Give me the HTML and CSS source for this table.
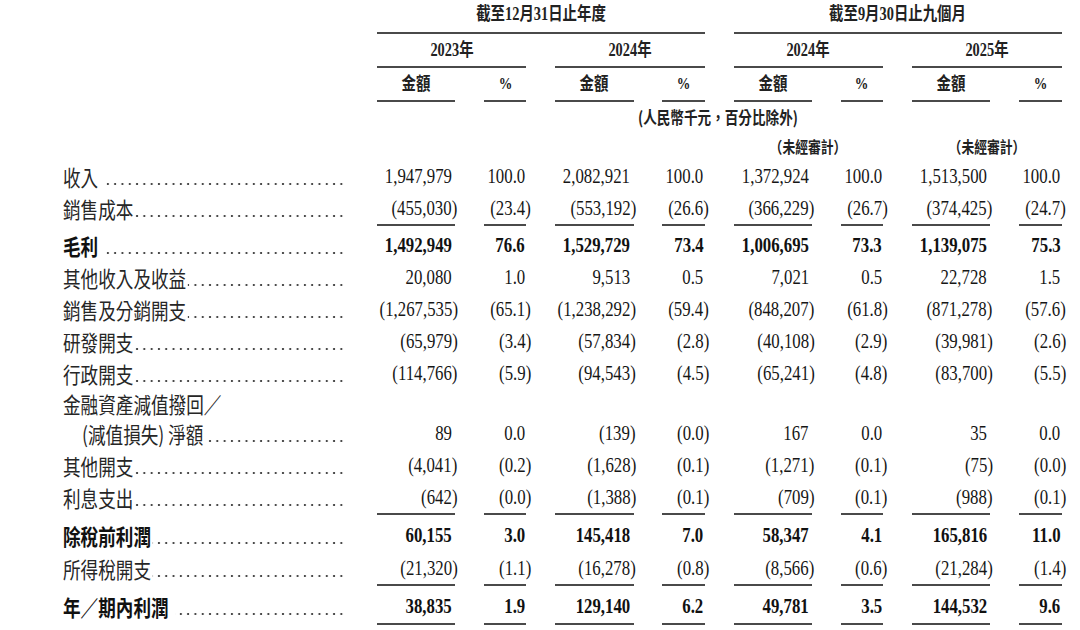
FILE: index.html
```html
<!DOCTYPE html>
<html lang="zh-Hant">
<head>
<meta charset="utf-8">
<title>損益表摘要</title>
<link rel="stylesheet" href="styles.css">
</head>
<body>
<div class="sheet">
  <div class="row hA">
    <div class="lbl nodots"></div>
    <div class="h g1"><span class="s">截至12月31日止年度</span></div>
    <div class="h g2"><span class="s">截至9月30日止九個月</span></div>
  </div>
  <div class="row hB">
    <div class="lbl nodots"></div>
    <div class="h y1"><span class="s">2023年</span></div>
    <div class="h y2"><span class="s">2024年</span></div>
    <div class="h y3"><span class="s">2024年</span></div>
    <div class="h y4"><span class="s">2025年</span></div>
  </div>
  <div class="row hC">
    <div class="lbl nodots"></div>
    <div class="h"><span class="s">金額</span></div><div class="h pc"><span class="s">%</span></div>
    <div class="h"><span class="s">金額</span></div><div class="h pc"><span class="s">%</span></div>
    <div class="h"><span class="s">金額</span></div><div class="h pc"><span class="s">%</span></div>
    <div class="h"><span class="s">金額</span></div><div class="h pc"><span class="s">%</span></div>
  </div>
  <div class="row hD">
    <div class="lbl nodots"></div>
    <div class="h all"><span class="s">(人民幣千元，百分比除外)</span></div>
  </div>
  <div class="row hE">
    <div class="lbl nodots"></div>
    <div class="h y3"><span class="s">（未經審計）</span></div>
    <div class="h y4"><span class="s">（未經審計）</span></div>
  </div>

  <div class="row d">
    <div class="lbl"><span class="t sp">收入</span></div>
    <div class="a"><span class="n">1,947,979</span></div><div class="p"><span class="n">100.0</span></div>
    <div class="a"><span class="n">2,082,921</span></div><div class="p"><span class="n">100.0</span></div>
    <div class="a"><span class="n">1,372,924</span></div><div class="p"><span class="n">100.0</span></div>
    <div class="a"><span class="n">1,513,500</span></div><div class="p"><span class="n">100.0</span></div>
  </div>
  <div class="row d ul">
    <div class="lbl"><span class="t">銷售成本</span></div>
    <div class="a"><span class="n neg">(455,030)</span></div><div class="p"><span class="n neg">(23.4)</span></div>
    <div class="a"><span class="n neg">(553,192)</span></div><div class="p"><span class="n neg">(26.6)</span></div>
    <div class="a"><span class="n neg">(366,229)</span></div><div class="p"><span class="n neg">(26.7)</span></div>
    <div class="a"><span class="n neg">(374,425)</span></div><div class="p"><span class="n neg">(24.7)</span></div>
  </div>
  <div class="row d b after">
    <div class="lbl"><span class="t sp">毛利</span></div>
    <div class="a"><span class="n">1,492,949</span></div><div class="p"><span class="n">76.6</span></div>
    <div class="a"><span class="n">1,529,729</span></div><div class="p"><span class="n">73.4</span></div>
    <div class="a"><span class="n">1,006,695</span></div><div class="p"><span class="n">73.3</span></div>
    <div class="a"><span class="n">1,139,075</span></div><div class="p"><span class="n">75.3</span></div>
  </div>
  <div class="row d">
    <div class="lbl"><span class="t">其他收入及收益</span></div>
    <div class="a"><span class="n">20,080</span></div><div class="p"><span class="n">1.0</span></div>
    <div class="a"><span class="n">9,513</span></div><div class="p"><span class="n">0.5</span></div>
    <div class="a"><span class="n">7,021</span></div><div class="p"><span class="n">0.5</span></div>
    <div class="a"><span class="n">22,728</span></div><div class="p"><span class="n">1.5</span></div>
  </div>
  <div class="row d">
    <div class="lbl"><span class="t">銷售及分銷開支</span></div>
    <div class="a"><span class="n neg">(1,267,535)</span></div><div class="p"><span class="n neg">(65.1)</span></div>
    <div class="a"><span class="n neg">(1,238,292)</span></div><div class="p"><span class="n neg">(59.4)</span></div>
    <div class="a"><span class="n neg">(848,207)</span></div><div class="p"><span class="n neg">(61.8)</span></div>
    <div class="a"><span class="n neg">(871,278)</span></div><div class="p"><span class="n neg">(57.6)</span></div>
  </div>
  <div class="row d">
    <div class="lbl"><span class="t">研發開支</span></div>
    <div class="a"><span class="n neg">(65,979)</span></div><div class="p"><span class="n neg">(3.4)</span></div>
    <div class="a"><span class="n neg">(57,834)</span></div><div class="p"><span class="n neg">(2.8)</span></div>
    <div class="a"><span class="n neg">(40,108)</span></div><div class="p"><span class="n neg">(2.9)</span></div>
    <div class="a"><span class="n neg">(39,981)</span></div><div class="p"><span class="n neg">(2.6)</span></div>
  </div>
  <div class="row d">
    <div class="lbl"><span class="t">行政開支</span></div>
    <div class="a"><span class="n neg">(114,766)</span></div><div class="p"><span class="n neg">(5.9)</span></div>
    <div class="a"><span class="n neg">(94,543)</span></div><div class="p"><span class="n neg">(4.5)</span></div>
    <div class="a"><span class="n neg">(65,241)</span></div><div class="p"><span class="n neg">(4.8)</span></div>
    <div class="a"><span class="n neg">(83,700)</span></div><div class="p"><span class="n neg">(5.5)</span></div>
  </div>
  <div class="row d short">
    <div class="lbl nodots"><span class="t">金融資產減值撥回／</span></div>
  </div>
  <div class="row d">
    <div class="lbl indent"><span class="t">(減值損失) 淨額</span></div>
    <div class="a"><span class="n">89</span></div><div class="p"><span class="n">0.0</span></div>
    <div class="a"><span class="n neg">(139)</span></div><div class="p"><span class="n neg">(0.0)</span></div>
    <div class="a"><span class="n">167</span></div><div class="p"><span class="n">0.0</span></div>
    <div class="a"><span class="n">35</span></div><div class="p"><span class="n">0.0</span></div>
  </div>
  <div class="row d">
    <div class="lbl"><span class="t">其他開支</span></div>
    <div class="a"><span class="n neg">(4,041)</span></div><div class="p"><span class="n neg">(0.2)</span></div>
    <div class="a"><span class="n neg">(1,628)</span></div><div class="p"><span class="n neg">(0.1)</span></div>
    <div class="a"><span class="n neg">(1,271)</span></div><div class="p"><span class="n neg">(0.1)</span></div>
    <div class="a"><span class="n neg">(75)</span></div><div class="p"><span class="n neg">(0.0)</span></div>
  </div>
  <div class="row d ul">
    <div class="lbl"><span class="t">利息支出</span></div>
    <div class="a"><span class="n neg">(642)</span></div><div class="p"><span class="n neg">(0.0)</span></div>
    <div class="a"><span class="n neg">(1,388)</span></div><div class="p"><span class="n neg">(0.1)</span></div>
    <div class="a"><span class="n neg">(709)</span></div><div class="p"><span class="n neg">(0.1)</span></div>
    <div class="a"><span class="n neg">(988)</span></div><div class="p"><span class="n neg">(0.1)</span></div>
  </div>
  <div class="row d b after tall">
    <div class="lbl"><span class="t">除稅前利潤</span></div>
    <div class="a"><span class="n">60,155</span></div><div class="p"><span class="n">3.0</span></div>
    <div class="a"><span class="n">145,418</span></div><div class="p"><span class="n">7.0</span></div>
    <div class="a"><span class="n">58,347</span></div><div class="p"><span class="n">4.1</span></div>
    <div class="a"><span class="n">165,816</span></div><div class="p"><span class="n">11.0</span></div>
  </div>
  <div class="row d ul tall">
    <div class="lbl"><span class="t">所得稅開支</span></div>
    <div class="a"><span class="n neg">(21,320)</span></div><div class="p"><span class="n neg">(1.1)</span></div>
    <div class="a"><span class="n neg">(16,278)</span></div><div class="p"><span class="n neg">(0.8)</span></div>
    <div class="a"><span class="n neg">(8,566)</span></div><div class="p"><span class="n neg">(0.6)</span></div>
    <div class="a"><span class="n neg">(21,284)</span></div><div class="p"><span class="n neg">(1.4)</span></div>
  </div>
  <div class="row d b ul after taller">
    <div class="lbl"><span class="t sp">年／期內利潤</span></div>
    <div class="a"><span class="n">38,835</span></div><div class="p"><span class="n">1.9</span></div>
    <div class="a"><span class="n">129,140</span></div><div class="p"><span class="n">6.2</span></div>
    <div class="a"><span class="n">49,781</span></div><div class="p"><span class="n">3.5</span></div>
    <div class="a"><span class="n">144,532</span></div><div class="p"><span class="n">9.6</span></div>
  </div>
</div>
</body>
</html>
```

FILE: styles.css
```css
html, body {
  margin: 0;
  padding: 0;
  background: #ffffff;
  overflow: hidden;
}
body {
  width: 1080px;
  height: 630px;
}
.sheet {
  width: 1080px;
  color: #1c1c1c;
  font-family: "Liberation Serif", "Noto Sans CJK TC", serif;
}
.row {
  display: grid;
  grid-template-columns: 285px repeat(4, 78.4px 42.4px);
  column-gap: 28.8px;
  padding-left: 63px;
  box-sizing: border-box;
  height: 32px;
}
/* header */
.h {
  display: flex;
  align-items: center;
  justify-content: center;
  min-width: 0;
  font-family: "Liberation Serif", "Noto Sans CJK TC", serif;
  font-weight: 700;
  font-size: 18px;
  white-space: nowrap;
  color: #222;
}
.s {
  display: inline-block;
  flex: none;
  transform: scaleX(0.8);
  transform-origin: 50% 50%;
  line-height: 24px;
}
.hA { height: 34px; }
.hA .h { border-bottom: 2px solid #4a4a4a; padding-bottom: 4px; }
.g1 { grid-column: 2 / 6; }
.g2 { grid-column: 6 / 10; }
.hB { height: 34px; }
.hB .h { border-bottom: 2px solid #4a4a4a; }
.y1 { grid-column: 2 / 4; }
.y2 { grid-column: 4 / 6; }
.y3 { grid-column: 6 / 8; }
.y4 { grid-column: 8 / 10; }
.hC { height: 34px; }
.hC .h { border-bottom: 2px solid #4a4a4a; }
.hC .pc { font-size: 17px; }
.hD { height: 30px; }
.hD .h { font-size: 17px; font-family: "Noto Sans CJK TC", sans-serif; }
.all { grid-column: 2 / 10; padding-right: 3px; }
.hE { height: 28px; }
.hE .h { font-size: 16px; font-family: "Noto Sans CJK TC", sans-serif; }

/* label column with dot leaders */
.lbl {
  display: flex;
  align-items: center;
  min-width: 0;
  padding-right: 3px;
  background-image: radial-gradient(circle at center, #4a4a4a 0, #4a4a4a 0.9px, rgba(74,74,74,0) 1.5px);
  background-size: 7.3px 4px;
  background-repeat: repeat-x;
  background-origin: content-box;
  background-clip: content-box;
  background-position: right 0 top calc(50% + 8px);
}
.lbl.nodots { background: none; }
.t {
  display: inline-block;
  flex: none;
  font-family: "Noto Sans CJK TC", sans-serif;
  font-size: 22px;
  line-height: 26px;
  white-space: nowrap;
  color: #262626;
  background: #ffffff;
  padding-right: 2px;
  transform: scaleX(0.8);
  transform-origin: 0 50%;
}
.t.sp { padding-right: 8px; }
.indent { padding-left: 19px; }

/* numbers */
.a, .p {
  display: flex;
  align-items: center;
  justify-content: flex-end;
  min-width: 0;
  font-size: 21px;
  white-space: nowrap;
  color: #161616;
}
.a { padding-right: 3.2px; }
.p { padding-right: 1.2px; }
.n {
  display: inline-block;
  flex: none;
  line-height: 24px;
  transform: scaleX(0.8);
  transform-origin: 100% 50%;
}
.n.neg { margin-right: -5.6px; }
.b .t, .b .a, .b .p { font-weight: 700; color: #111; }
.ul { height: 34px; }
.ul .a, .ul .p { border-bottom: 2px solid #4a4a4a; }
.ul .lbl { border-bottom: 2px solid transparent; }
.after { margin-top: 3px; }
.short { height: 28px; }
.tall { height: 33px; }
.ul.tall { height: 35px; }
.ul.taller { height: 36px; }
```
